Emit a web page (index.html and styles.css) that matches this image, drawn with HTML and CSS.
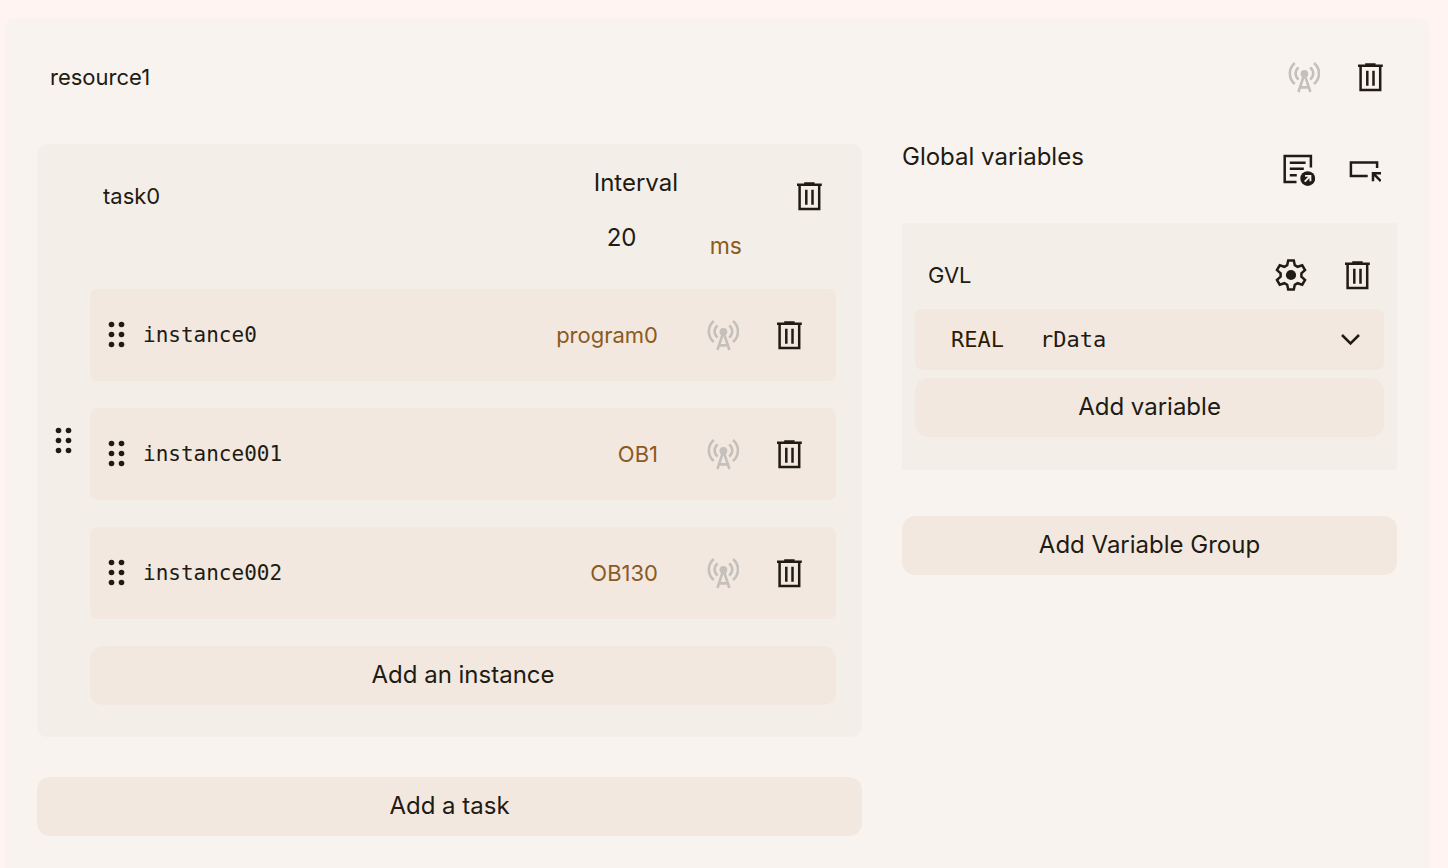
FILE: index.html
```html
<!DOCTYPE html>
<html lang="en">
<head>
    <meta charset="UTF-8">
    <meta name="viewport" content="width=device-width, initial-scale=1.0">
    <title>resource1</title>
    <link rel="stylesheet" href="styles.css">
</head>
<body>
    <svg class="sprite" aria-hidden="true">
        <symbol id="trash" viewBox="0 0 32 32">
            <path d="M4 4.700h24.800M11.200 3.400h10.400M6.600 5v24h19.600V5M13.300 9.700v15M19.500 9.700v15" fill="none" stroke="currentColor" stroke-width="2.500"/>
        </symbol>
        <symbol id="antenna" viewBox="0 0 32 32">
            <g fill="none" stroke="currentColor" stroke-width="2.600">
                <path d="M6.800 2C.2 7.600.2 17.200 6.800 23M26 2c6.600 5.600 6.600 15.200 0 21M10.600 6.400c-4 3.600-4 8.600 0 12.200M22.200 6.400c4 3.600 4 8.600 0 12.200"/>
                <path d="M16.400 13L10.400 31M16.400 13l6 18M12 26.400h9"/>
            </g>
            <circle cx="16.400" cy="12.800" r="3.900" fill="currentColor"/>
        </symbol>
        <symbol id="grip" viewBox="0 0 32 32">
            <g fill="currentColor">
                <circle cx="10.500" cy="5.500" r="2.800"/><circle cx="20.500" cy="5.500" r="2.800"/>
                <circle cx="10.500" cy="15.500" r="2.800"/><circle cx="20.500" cy="15.500" r="2.800"/>
                <circle cx="10.500" cy="25.500" r="2.800"/><circle cx="20.500" cy="25.500" r="2.800"/>
            </g>
        </symbol>
        <symbol id="note" viewBox="0 0 32 32">
            <path d="M13.500 28H1.700V1.900h26.200v11.600M6.800 8.700h15.800M6.800 14.800h14M6.800 21.300h7" fill="none" stroke="currentColor" stroke-width="2.500"/>
            <circle cx="24.700" cy="24.600" r="7.400" fill="currentColor"/>
            <path d="M21.700 27.600l5.400-5.400M22 21.900h5.400v5.400" fill="none" stroke="#f8f3ee" stroke-width="1.900"/>
        </symbol>
        <symbol id="pick" viewBox="0 0 32 32">
            <path d="M18.700 21.900H1.900V8.500h26.200V14M32 19.200h-8v8M24.200 19.400l7.600 7.600" fill="none" stroke="currentColor" stroke-width="2.500"/>
        </symbol>
        <symbol id="gear" viewBox="0 0 32 32">
            <path d="M13.200 1.400h5.600l1 4.800 2.800 1.600 4.640-1.520 2.800 4.840L26.400 14.400v3.200l3.640 3.280-2.800 4.840-4.640-1.520-2.800 1.600-1 4.800h-5.600l-1-4.800-2.800-1.600-4.640 1.520-2.800-4.840L5.600 17.600v-3.200l-3.640-3.280 2.800-4.840L9.400 7.800l2.800-1.600z" fill="none" stroke="currentColor" stroke-width="2.500"/>
            <circle cx="16" cy="16" r="5.100" fill="currentColor"/>
        </symbol>
        <symbol id="chevron" viewBox="0 0 32 32">
            <path d="M8 11l8.500 8.500L25 11" fill="none" stroke="currentColor" stroke-width="2.500"/>
        </symbol>
    </svg>

    <main class="resource">
        <header class="row">
            <input class="name" type="text" value="resource1" aria-label="Resource name">
            <button class="icon" aria-label="Online" disabled><svg><use href="#antenna"/></svg></button>
            <button class="icon" aria-label="Delete resource"><svg><use href="#trash"/></svg></button>
        </header>

        <div class="columns">
            <section class="tasks">
                <div class="task">
                    <div class="handle"><svg><use href="#grip"/></svg></div>
                    <div class="task-body">
                        <div class="task-header">
                            <input class="name" type="text" value="task0" aria-label="Task name">
                            <div class="interval">
                                <label for="interval">Interval</label>
                                <input class="name" id="interval" type="text" inputmode="numeric" value="20">
                            </div>
                            <button class="unit">ms</button>
                            <button class="icon" aria-label="Delete task"><svg><use href="#trash"/></svg></button>
                        </div>
                        <div class="instances">
                            <div class="instance">
                                <div class="handle"><svg><use href="#grip"/></svg></div>
                                <input class="code" type="text" value="instance0" aria-label="Instance name">
                                <button class="program">program0</button>
                                <button class="icon" aria-label="Online" disabled><svg><use href="#antenna"/></svg></button>
                                <button class="icon" aria-label="Delete instance"><svg><use href="#trash"/></svg></button>
                            </div>
                            <div class="instance">
                                <div class="handle"><svg><use href="#grip"/></svg></div>
                                <input class="code" type="text" value="instance001" aria-label="Instance name">
                                <button class="program">OB1</button>
                                <button class="icon" aria-label="Online" disabled><svg><use href="#antenna"/></svg></button>
                                <button class="icon" aria-label="Delete instance"><svg><use href="#trash"/></svg></button>
                            </div>
                            <div class="instance">
                                <div class="handle"><svg><use href="#grip"/></svg></div>
                                <input class="code" type="text" value="instance002" aria-label="Instance name">
                                <button class="program">OB130</button>
                                <button class="icon" aria-label="Online" disabled><svg><use href="#antenna"/></svg></button>
                                <button class="icon" aria-label="Delete instance"><svg><use href="#trash"/></svg></button>
                            </div>
                            <button class="add">Add an instance</button>
                        </div>
                    </div>
                </div>
                <button class="add">Add a task</button>
            </section>

            <section class="globals">
                <div class="globals-header">
                    <h2>Global variables</h2>
                    <button class="icon" aria-label="Open as text"><svg><use href="#note"/></svg></button>
                    <button class="icon" aria-label="Select"><svg><use href="#pick"/></svg></button>
                </div>
                <div class="group">
                    <div class="row">
                        <input class="name" type="text" value="GVL" aria-label="Group name">
                        <button class="icon" aria-label="Settings"><svg><use href="#gear"/></svg></button>
                        <button class="icon" aria-label="Delete group"><svg><use href="#trash"/></svg></button>
                    </div>
                    <div class="variable">
                        <button class="type">REAL</button>
                        <input class="code" type="text" value="rData" aria-label="Variable name">
                        <button class="icon" aria-label="Expand"><svg><use href="#chevron"/></svg></button>
                    </div>
                    <button class="add">Add variable</button>
                </div>
                <button class="add">Add Variable Group</button>
            </section>
        </div>
    </main>
</body>
</html>
```
FILE: styles.css
```css
* {
    box-sizing: border-box;
}

body {
    margin: 0;
    padding: 18px 18px 0 5px;
    min-height: 100vh;
    display: flex;
    background-color: #fff4f1;
    color: #201b13;
    font-family: Inter, sans-serif;
    font-size: 22px;
    line-height: 26px;
}

button,
input {
    font: inherit;
    color: inherit;
    background: none;
    border: none;
    margin: 0;
    padding: 0;
    min-width: 0;
}

button {
    cursor: pointer;
}

.sprite {
    display: none;
}

.resource {
    flex: 1;
    min-width: 0;
    padding: 33px 33px 32px 32px;
    background-color: #f8f3ee;
    border-radius: 10px 10px 0 0;
}

.row {
    display: flex;
    align-items: center;
    gap: 12px;
}

.name {
    flex: 1;
    height: 52px;
    padding: 0 13px;
}

.icon {
    flex: none;
    display: flex;
    align-items: center;
    justify-content: center;
    width: 54px;
    height: 52px;
}

.icon svg,
.handle svg {
    width: 32px;
    height: 32px;
    overflow: visible;
}

.icon:disabled {
    color: #c5c0bb;
    cursor: default;
}

.columns {
    display: grid;
    grid-template-columns: minmax(0, 5fr) minmax(0, 3fr);
    align-items: start;
    gap: 40px;
    margin-top: 41px;
}

.tasks {
    display: flex;
    flex-direction: column;
    gap: 40px;
}

.task {
    display: flex;
    padding-right: 26px;
    background-color: #f4eee8;
    border-radius: 10px;
}

.handle {
    flex: none;
    width: 53px;
    display: flex;
    align-items: center;
    justify-content: center;
    cursor: grab;
}

.task-body {
    flex: 1;
    min-width: 0;
    padding: 26px 0 32px;
}

.task-header {
    display: flex;
    align-items: flex-start;
    margin-bottom: 26px;
}

.interval {
    display: flex;
    flex-direction: column;
    gap: 15px;
    width: 90px;
    font-size: 24px;
}

.interval .name {
    flex: none;
    width: 100%;
}

.unit {
    align-self: flex-end;
    height: 34px;
    margin: 0 27px 0 13px;
    padding: 0 13px;
    color: #8b5a1e;
    font-size: 23px;
}

.instances {
    display: flex;
    flex-direction: column;
    gap: 27px;
}

.instance {
    display: flex;
    align-items: center;
    gap: 12px;
    height: 92px;
    padding-right: 20px;
    background-color: #f3e8df;
    border-radius: 7px;
}

.instance .handle {
    margin-right: -12px;
}

.code {
    flex: 1;
    height: 52px;
    font-family: "DejaVu Sans Mono", monospace;
    font-size: 21px;
}

.program {
    height: 52px;
    padding: 0 26px;
    color: #8b5a1e;
}

.add {
    height: 59px;
    padding-bottom: 2px;
    background-color: #f3e8df;
    border-radius: 13px;
    font-size: 24px;
}

.globals {
    display: flex;
    flex-direction: column;
}

.globals-header {
    display: flex;
    align-items: flex-start;
    gap: 12px;
    padding-right: 5px;
    margin-bottom: 27px;
}

h2 {
    flex: 1;
    margin: 0;
    font-size: 24px;
    font-weight: 400;
}

.group {
    display: flex;
    flex-direction: column;
    gap: 8px;
    padding: 26px 13px 33px;
    margin-bottom: 46px;
    background-color: #f4eee8;
}

.variable {
    display: flex;
    align-items: center;
    gap: 36px;
    height: 61px;
    padding: 0 7px 0 36px;
    background-color: #f3e8df;
    border-radius: 7px;
}

.variable .code,
.type {
    height: 52px;
    font-family: "DejaVu Sans Mono", monospace;
    font-size: 22px;
}

.type {
    color: #2f1b00;
}
```
